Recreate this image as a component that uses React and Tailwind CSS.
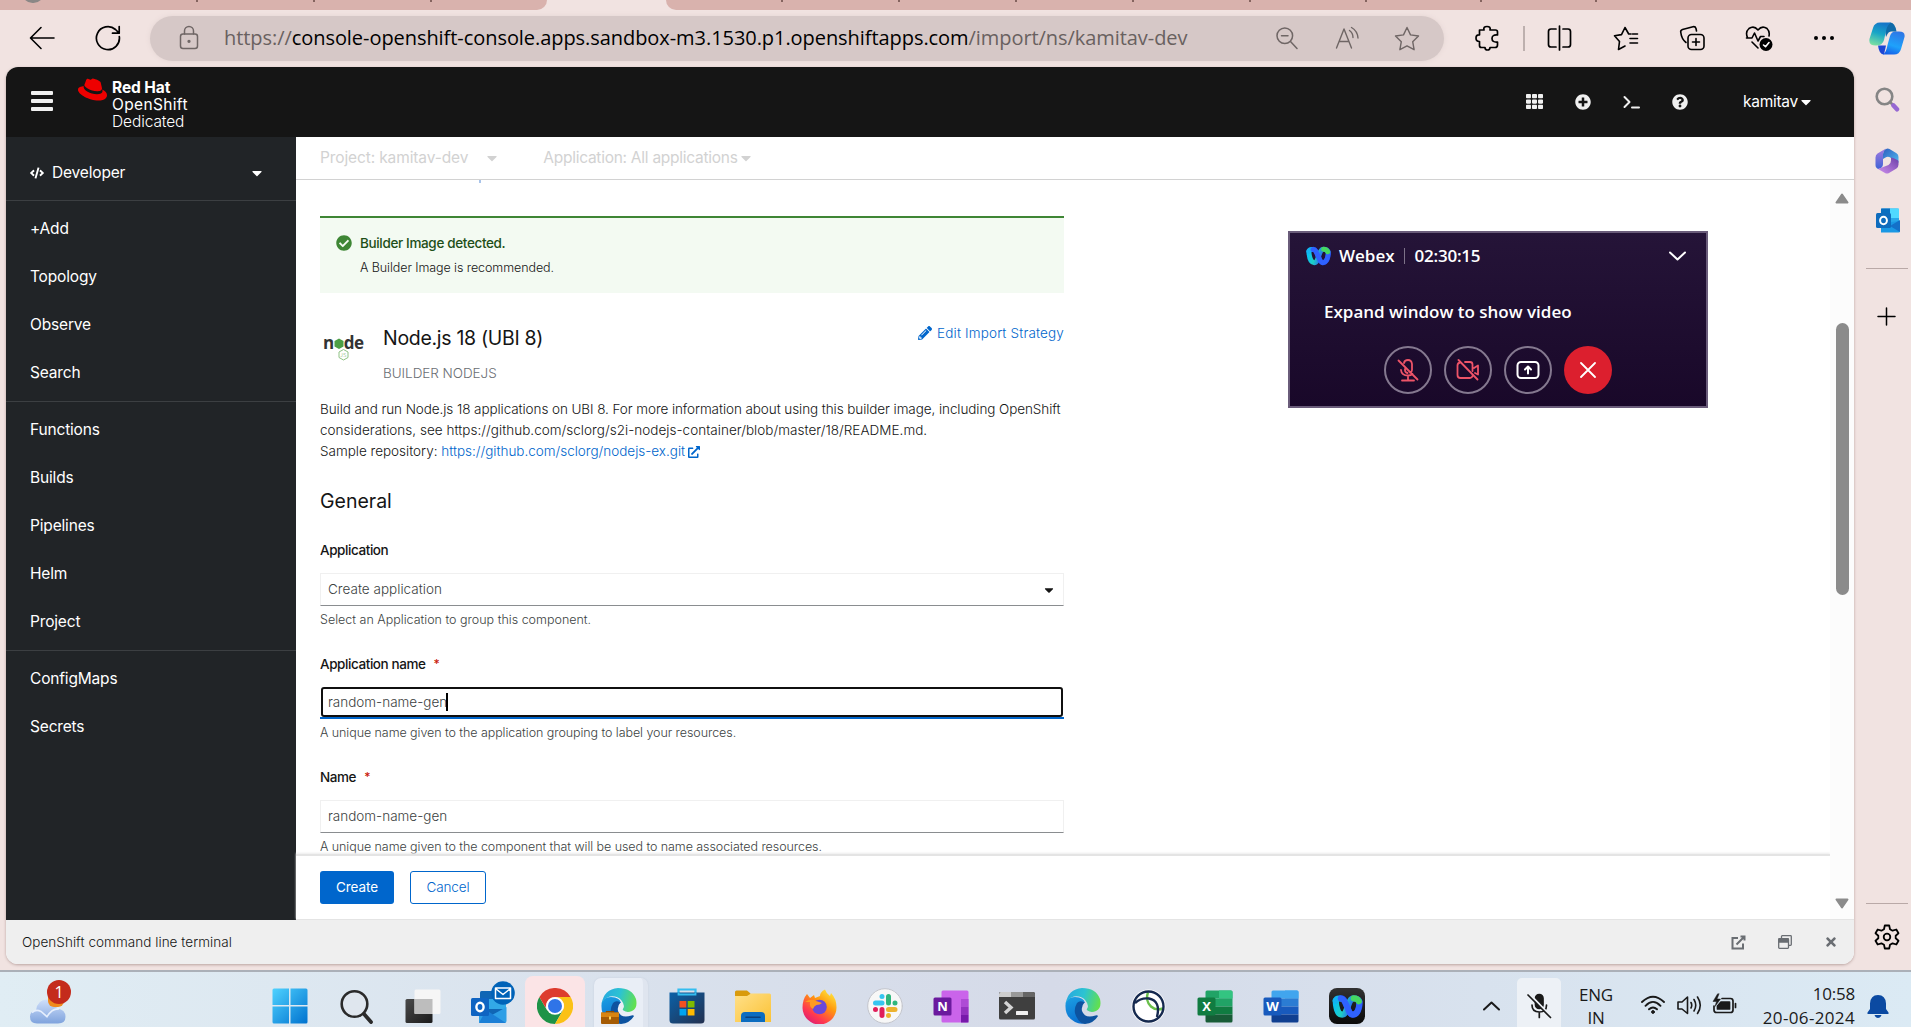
import React from 'react';
import {
  FaRedhat, FaTh, FaPlusCircle, FaQuestionCircle, FaCaretDown, FaCode,
  FaCheckCircle, FaPencilAlt, FaExternalLinkAlt, FaTimes,
} from 'react-icons/fa';

const SEGOE = "font-['Open_Sans','Noto_Sans',sans-serif]";

/* ---------- shared pieces ---------- */

function Line({ children, w = 24, h = 24, sw = 1.5, box = '0 0 24 24', className = '' }) {
  return (
    <svg width={w} height={h} viewBox={box} fill="none" stroke="currentColor" strokeWidth={sw}
      strokeLinecap="round" strokeLinejoin="round" className={`shrink-0 ${className}`}>
      {children}
    </svg>
  );
}

function WebexMark({ w, h, id }) {
  return (
    <svg width={w} height={h} viewBox="0 0 32 24" fill="none" strokeLinecap="round" strokeWidth="6.4">
      <defs>
        <linearGradient id={`${id}a`} x1="0" y1="0" x2="1" y2="0.2">
          <stop offset="0" stopColor="#07c1f4" /><stop offset="0.4" stopColor="#1fcfc4" /><stop offset="0.8" stopColor="#2563f5" />
        </linearGradient>
      </defs>
      <path d="M28.500 7C29 13 26.500 20.500 21.500 20.500C16 20.500 15 3.500 9.500 3.500" stroke="#1d3fd8" />
      <path d="M3.700 6C4 13 6 20.500 10.500 20.500C16.500 20.500 16 3.500 22.500 3.500C25 3.500 27 4.500 28 6" stroke={`url(#${id}a)`} />
      <path d="M3.700 6C4.500 3.500 6.500 3.500 8 3.700" stroke="#12b4f2" />
      <path d="M9 3.600C15 3.600 16 20.500 21.500 20.500C26 20.500 28 14 28.500 8" stroke="#2f62ff" />
      <path d="M22.500 3.500Q26.500 3.600 27.800 6.500" stroke="#45d862" />
    </svg>
  );
}

/* ---------- browser ---------- */

function Ticks({ items }) {
  return items.map((gap, i) => (
    <span key={i} className="flex shrink-0 justify-end" style={{ width: gap }}>
      <i className="h-[2px] w-[2px] bg-[#85645f]" />
    </span>
  ));
}

function TabStrip() {
  return (
    <div className="flex h-[10px] justify-between overflow-hidden">
      <div className="flex w-[547px] rounded-br-[10px] bg-[#d9b2ad]">
        <i className="-mt-[18px] ml-[22px] h-[21px] w-[22px] rounded-full bg-[#8b8786]" />
        <Ticks items={[154, 117, 117]} />
      </div>
      <div className="flex w-[1245px] rounded-bl-[10px] bg-[#d9b2ad]">
        <Ticks items={[117, 117, 117, 117, 117, 116, 115, 115]} />
      </div>
    </div>
  );
}

function Toolbar() {
  return (
    <div className="flex h-[57px] items-center pb-[1px] text-black">
      <Line w={26} h={26} sw={1.6} box="0 0 26 26" className="ml-[29px]">
        <path d="M25 13H2M12 2.500L1.500 13L12 23.500" />
      </Line>
      <Line w={26} h={26} sw={1.7} box="0 0 26 26" className="ml-[40px]">
        <path d="M24.300 11.500A11.500 11.500 0 1 1 20.500 4.500L24 8M24.200 1.500V8.200H17.500" />
      </Line>

      <div className="ml-[29px] flex h-[45px] w-[1294px] items-center rounded-full bg-[#d6c8c7] text-[#6f6665] shadow-[0_0_5px_#e3d4d2]">
        <Line w={20} h={25} sw={1.5} box="0 0 20 25" className="mb-px ml-[29px]">
          <rect x="1.500" y="9" width="17" height="14.500" rx="2.500" />
          <path d="M5.500 9V6A4.500 4.500 0 0 1 14.500 6V9" />
          <circle cx="10" cy="16.300" r="0.900" fill="currentColor" />
        </Line>
        <div className={`ml-[25px] w-[1052px] whitespace-nowrap text-[20px] tracking-[-0.06px] text-[#696160] ${SEGOE}`}>
          https://<span className="text-black">console-openshift-console.apps.sandbox-m3.1530.p1.openshiftapps.com</span>/import/ns/kamitav-dev
        </div>
        <Line w={22} h={23} sw={1.5} box="0 0 22 23">
          <circle cx="8.800" cy="8.800" r="7.800" /><path d="M14.500 14.500L21 21.500M5.500 8.800H12" />
        </Line>
        <Line w={25} h={24} sw={1.4} box="0 0 25 24" className="mb-px ml-[37px]">
          <path d="M1.500 22L9 3L16.500 22M4.200 15.500H13.800M14.500 4.500Q18 7 18 11.500M16.500 1.500Q22.500 5 23 12" />
        </Line>
        <Line w={26} h={25} sw={1.4} box="0 0 26 25" className="ml-[34px]">
          <path d="M13 1.500L16.500 8.900L24.500 10L18.700 15.700L20.100 23.700L13 19.900L5.900 23.700L7.300 15.700L1.500 10L9.500 8.900Z" />
        </Line>
      </div>

      <Line w={25} h={26} sw={1.7} box="0 0 25 26" className="ml-[31px]">
        <path d="M4.500 5H9Q8 1.500 12 1.500T15 5H20.500A2 2 0 0 1 22.500 7V10Q17 9.500 17 13.500T22.500 17V20A2.500 2.500 0 0 1 20 22.500H15Q15 25 12.500 25T10 22.500H6.500A2 2 0 0 1 4.500 20.500V16.500Q1 16.500 1 13T4.500 10Z" />
      </Line>
      <i className="ml-[23px] h-[25px] w-[2px] bg-[#bdb0ae]" />
      <Line w={25} h={26} sw={1.7} box="0 0 25 26" className="ml-[22px]">
        <path d="M12.500 1V25M9 4H4Q1.500 4 1.500 6.500V19.500Q1.500 22 4 22H9M16 4H21Q23.500 4 23.500 6.500V19.500Q23.500 22 21 22H16" />
      </Line>
      <Line w={27} h={25} sw={1.6} box="0 0 27 25" className="ml-[41px]">
        <path d="M18 8H15.700L12 1.500L8.500 8.600L1.500 9.800L6.500 15.500L5.500 23.500L12 20M17 12.500H24.500M17 17H24.500M19.500 8H24.500" />
      </Line>
      <Line w={27} h={26} sw={1.6} box="0 0 27 26" className="ml-[39px]">
        <rect x="9" y="9.500" width="16" height="15" rx="3.500" />
        <path d="M17 13.500V20.500M13.500 17H20.500M17.500 6L17 3.500Q16.300 1.200 14 1.700L3.500 4.500Q1.200 5.300 1.800 7.500Q2.500 14 7 17.500" />
      </Line>
      <Line w={29} h={27} sw={1.6} box="0 0 29 27" className="ml-[39px]">
        <path d="M2.500 12.500Q0 7 4 3.500Q9 0 13 5Q17 0 22 3.500Q25 6.500 24 11M1.500 13H7L9.500 8L13 16L15.500 11.500H19M7 17L13 23" />
        <circle cx="21" cy="19.500" r="6.500" fill="#000" stroke="none" />
        <path d="M18.500 20L20.500 21.700L24 17.500" stroke="#fff" />
      </Line>
      <Line w={24} h={6} sw={0} box="0 0 24 6" className="ml-[38px]">
        <g fill="#000"><circle cx="4" cy="3" r="2" /><circle cx="12" cy="3" r="2" /><circle cx="20" cy="3" r="2" /></g>
      </Line>
      <svg width="36" height="33" viewBox="0 0 36 33" className="ml-[33px] mr-[6px] shrink-0">
        <defs>
          <linearGradient id="cp1" x1="0.500" y1="0" x2="0.200" y2="1"><stop offset="0" stopColor="#1677c8" /><stop offset="0.450" stopColor="#18a5c7" /><stop offset="1" stopColor="#7fe2a0" /></linearGradient>
          <linearGradient id="cp2" x1="0.600" y1="0" x2="0.300" y2="1"><stop offset="0" stopColor="#2e78e6" /><stop offset="0.600" stopColor="#1ea2fb" /><stop offset="1" stopColor="#1560e8" /></linearGradient>
        </defs>
        <path d="M9 23.500H17L15 32.500Q10 32.500 9 23.500Z" fill="#1d46d4" />
        <path d="M14 32.500Q17.500 30 18.500 23L21 14Q22.500 9.500 26 9.500H30Q36.500 9.500 35.500 15L32 27Q30.500 32.500 25 32.500Z" fill="url(#cp2)" />
        <path d="M21 0.500Q26 0.500 27.500 9.500H22Q19.500 9.500 18.500 12L17 15Q14 5 21 0.500Z" fill="#0f6aa8" />
        <path d="M11 0.500H22Q18.500 2 17 9L15 18Q13.500 23.500 7 23.500Q-1 23.500 0.600 16.500L4 6Q5.500 0.500 11 0.500Z" fill="url(#cp1)" />
      </svg>
    </div>
  );
}

function EdgeSidebar() {
  return (
    <div className="flex w-[57px] flex-col items-center pl-[9px] text-black">
      <svg width="25" height="25" viewBox="0 0 25 25" className="mt-[20px]" fill="none" strokeLinecap="round">
        <circle cx="9.500" cy="9.500" r="7.800" stroke="#858585" strokeWidth="2.600" />
        <path d="M15 15L17.500 17.500" stroke="#858585" strokeWidth="2.600" />
        <path d="M18.500 18.500L22 22.300" stroke="#9668d2" strokeWidth="4.500" />
      </svg>
      <svg width="24" height="26" viewBox="0 0 24 26" className="mt-[36px]">
        <defs>
          <linearGradient id="ma" x1="0.500" y1="0" x2="0.500" y2="1"><stop offset="0" stopColor="#a57be0" /><stop offset="1" stopColor="#3f63d6" /></linearGradient>
          <linearGradient id="mb" x1="0" y1="0" x2="1" y2="1"><stop offset="0" stopColor="#2d5fc0" /><stop offset="1" stopColor="#51b8ee" /></linearGradient>
          <linearGradient id="mc" x1="0" y1="1" x2="1" y2="0"><stop offset="0" stopColor="#cf90ee" /><stop offset="1" stopColor="#6b3fa8" /></linearGradient>
        </defs>
        <path d="M11 0.500L2.500 5.500Q0.500 7 0.500 9.500V17Q0.500 20 3.500 21Q8 20 8 16V9Q8 3 11 0.500Z" fill="url(#ma)" />
        <path d="M9.500 2Q12 -0.500 14.500 1L21.500 5.200Q23.500 6.500 23.500 9V15L16 10Q13 8 10.500 9.500L8 11V6Z" fill="url(#mb)" />
        <path d="M23.500 13V16.500Q23.500 19 21.500 20.500L14 25Q12 26 10 25L3 21L13.500 17Q16 15.500 16 12.500V9.500Q22 11 23.500 13Z" fill="url(#mc)" />
      </svg>
      <svg width="24" height="25" viewBox="0 0 24 25" className="ml-px mt-[34px]">
        <rect x="5" y="0.500" width="18" height="18" rx="1.500" fill="#28a8ea" />
        <path d="M14 0.500H23V10H14Z" fill="#50d9ff" /><path d="M5 0.500H14V6H5Z" fill="#0a6fc0" />
        <path d="M5 24.500V15L24 13V23Q24 24.500 22.500 24.500Z" fill="#1a98e4" /><path d="M24 12V24L14 18Z" fill="#1470c8" />
        <rect x="0" y="5" width="15" height="15" rx="1.500" fill="#0f6cbd" />
        <ellipse cx="7.500" cy="12.500" rx="3.400" ry="3.800" fill="none" stroke="#fff" strokeWidth="2" />
      </svg>
      <i className="mt-[35px] h-px w-[42px] bg-[#b9a9a7]" />
      <Line w={19} h={19} sw={1.5} box="0 0 19 19" className="mr-[2px] mt-[38px]"><path d="M9.500 1V18M1 9.500H18" /></Line>
      <i className="mt-[577px] h-px w-[42px] bg-[#b9a9a7]" />
      <Line w={26} h={26} sw={1.8} box="0 0 26 26" className="mt-[20px]">
        <path d="M10.800 1.500H15.200L16 5.200L18.600 6.700L22.300 5.500L24.500 9.300L21.700 11.700V14.300L24.500 16.700L22.300 20.500L18.600 19.300L16 20.800L15.200 24.500H10.800L10 20.800L7.400 19.300L3.700 20.500L1.500 16.700L4.300 14.300V11.700L1.500 9.300L3.700 5.500L7.400 6.700L10 5.200Z" />
        <circle cx="13" cy="13" r="3.300" />
      </Line>
    </div>
  );
}

/* ---------- console ---------- */

function Masthead() {
  return (
    <header className="flex h-[70px] items-center bg-[#151515] text-[#f0f0f0]">
      <div className="mb-[2px] ml-[25px] flex w-[22px] flex-col gap-[4px]">
        <i className="h-[4px] rounded-[1px] bg-[#f0f0f0]" /><i className="h-[4px] rounded-[1px] bg-[#f0f0f0]" /><i className="h-[4px] rounded-[1px] bg-[#f0f0f0]" />
      </div>
      <FaRedhat className="mb-[26px] ml-[25px] size-[29px] text-[#ee0000]" />
      <div className="ml-[5px] mt-[5px] flex flex-col text-[15.500px] leading-[17px] text-white">
        <b className="font-bold tracking-[-0.1px]">Red Hat</b>
        <span className="tracking-[0.35px]">OpenShift</span>
        <span className="font-light tracking-[-0.1px]">Dedicated</span>
      </div>
      <div className="ml-auto flex items-center gap-[32px] pb-px">
        <FaTh className="size-[17px]" />
        <FaPlusCircle className="size-[16px]" />
        <Line w={17} h={16} sw={2} box="0 0 17 16"><path d="M1.500 3L6.500 8L1.500 13M9 13.500H16" /></Line>
        <FaQuestionCircle className="size-[16px]" />
      </div>
      <div className="ml-[55px] mr-[40px] flex items-center text-[15.500px] tracking-[-0.27px] text-white">
        kamitav <FaCaretDown className="size-[16px]" />
      </div>
    </header>
  );
}

const NAV = [
  ['+Add', 'Topology', 'Observe', 'Search'],
  ['Functions', 'Builds', 'Pipelines', 'Helm', 'Project'],
  ['ConfigMaps', 'Secrets'],
];

function Sidebar() {
  return (
    <nav className="w-[290px] shrink-0 bg-[#212427] text-[15.500px] tracking-[-0.17px] text-white">
      <div className="flex h-[64px] items-center border-b border-[#3c3f42] pl-[24px] pr-[31px] pt-[8px]">
        <FaCode className="size-[14px]" />
        <span className="ml-[8px]">Developer</span>
        <FaCaretDown className="ml-auto size-[16px]" />
      </div>
      {NAV.map((group, i) => (
        <div key={i} className={i < 2 ? 'border-b border-[#3c3f42] py-[4px]' : 'py-[4px]'}>
          {group.map((n) => <div key={n} className="flex h-[48px] items-center pl-[24px]">{n}</div>)}
        </div>
      ))}
    </nav>
  );
}

function Label({ children, required }) {
  return (
    <div className="flex h-[20px] items-center text-[13.500px] font-medium tracking-[-0.42px] text-[#151515]">
      {children}
      {required && <span className="ml-[8px] text-[12px] text-[#c9190b]">*</span>}
    </div>
  );
}

function Help({ children, tracking = 'tracking-[-0.07px]' }) {
  return <div className={`flex h-[20px] items-center whitespace-nowrap text-[12.500px] font-[350] text-[#3c3f42] ${tracking}`}>{children}</div>;
}

function ImportForm() {
  return (
    <div className="h-[674px] w-[744px] overflow-hidden font-[350]">
      <i className="ml-[159px] block h-[3px] w-[2px] bg-[#a9c4ea]" />
      <div className="mt-[33px] flex h-[77px] border-t-2 border-[#3e8635] bg-[#f3faf2] pl-[16px] text-[13.500px]">
        <FaCheckCircle className="mt-[17px] size-[16px] text-[#3e8635]" />
        <div className="ml-[8px] mt-[14px] flex flex-col gap-[2px] leading-[24px]">
          <span className="font-medium leading-[22px] tracking-[-0.35px] text-[#1e4f18]">Builder Image detected.</span>
          <span className="text-[12.500px] tracking-[-0.08px] text-[#151515]">A Builder Image is recommended.</span>
        </div>
      </div>

      <div className="mt-[28px] flex h-[72px]">
        <svg width="44" height="30" viewBox="0 0 44 30" className="ml-[2px] mt-[11px]">
          <g fontFamily="Open Sans" fontWeight="700" fontSize="17" fill="#333">
            <text x="1" y="17">n</text><text x="21.700" y="17">d</text><text x="32" y="17">e</text>
          </g>
          <path d="M17 6.500L21.500 9V14.500L17 17L12.500 14.500V9Z" fill="#4c9f45" />
          <path d="M21.500 17.500L26 20V25.500L21.500 28L17 25.500V20Z" fill="none" stroke="#8fc285" />
          <text x="18.300" y="25.200" fontSize="6.500" fontFamily="Lato" fill="#6fb064">JS</text>
        </svg>
        <div className="ml-[17px] flex flex-col text-[#151515]">
          <span className="mt-[3px] text-[19.500px] font-normal leading-[28px] tracking-[-0.3px]">Node.js 18 (UBI 8)</span>
          <span className="mt-[11px] text-[13.500px] leading-[20px] tracking-[-0.05px] text-[#6a6e73]">BUILDER NODEJS</span>
        </div>
        <div className="ml-auto flex h-[24px] items-center gap-[5px] text-[13.500px] tracking-[0.16px] text-[#0066cc]">
          <FaPencilAlt className="size-[14px]" />Edit Import Strategy
        </div>
      </div>

      <div className="mt-[6px] whitespace-nowrap text-[13.500px] leading-[21px] tracking-[-0.08px] text-[#151515]">
        <div>Build and run Node.js 18 applications on UBI 8. For more information about using this builder image, including OpenShift</div>
        <div className="tracking-[0.03px]">considerations, see https://github.com/sclorg/s2i-nodejs-container/blob/master/18/README.md.</div>
        <div className="flex items-center tracking-[-0.01px]">
          Sample repository:&nbsp;<span className="text-[#0066cc]">https://github.com/sclorg/nodejs-ex.git</span>
          <FaExternalLinkAlt className="ml-[3px] size-[12px] text-[#0066cc]" />
        </div>
      </div>

      <h2 className="mt-[25px] text-[19.500px] font-normal leading-[28px] text-[#151515]">General</h2>

      <div className="mt-[25px]"><Label>Application</Label></div>
      <div className="mt-[13px] flex h-[33px] items-center justify-between border border-[#f0f0f0] border-b-[#8a8d90] pl-[7px] pr-[7px] text-[13.500px] tracking-[0.02px] text-[#3c3f42]">
        Create application <FaCaretDown className="size-[14px] text-[#151515]" />
      </div>
      <div className="mt-[4px]"><Help tracking="tracking-[0px]">Select an Application to group this component.</Help></div>

      <div className="mt-[24px]"><Label required>Application name</Label></div>
      <div className="mt-[13px] h-[32px] border-b-2 border-[#0066cc] px-px">
        <div className="flex h-[30px] items-center rounded-[3px] border-2 border-[#101010] pl-[5px] text-[13.500px] text-[#3c3f42]">
          random-name-gen<i className="-ml-px h-[18px] w-[2px] bg-black" />
        </div>
      </div>
      <div className="mt-[4px]"><Help>A unique name given to the application grouping to label your resources.</Help></div>

      <div className="mt-[24px]"><Label required>Name</Label></div>
      <div className="mt-[13px] flex h-[33px] items-center border border-[#f0f0f0] border-b-[#8a8d90] pl-[7px] text-[13.500px] text-[#3c3f42]">
        random-name-gen
      </div>
      <div className="mt-[4px]"><Help>A unique name given to the component that will be used to name associated resources.</Help></div>
    </div>
  );
}

function WebexPanel() {
  const ring = 'flex size-[48px] items-center justify-center rounded-full border-2 border-[#84788f]';
  return (
    <section className={`absolute left-[1288px] top-[231px] flex h-[177px] w-[420px] flex-col border-2 border-[#6a5c7a] bg-linear-to-b from-[#251438] to-[#190829] text-[17px] font-semibold text-white ${SEGOE}`}>
      <div className="mt-[10px] flex h-[26px] items-center pl-[16px] pr-[20px]">
        <WebexMark w={25} h={20} id="wp" />
        <span className="ml-[8px]">Webex</span>
        <i className="ml-[9px] h-[16px] w-px bg-[#7d7288]" />
        <span className="ml-[10px] tracking-[-0.25px]">02:30:15</span>
        <Line w={17} h={10} sw={2} box="0 0 17 10" className="ml-auto"><path d="M1 1.500L8.500 8.500L16 1.500" /></Line>
      </div>
      <div className="mt-[30px] pl-[34px] leading-[26px]">Expand window to show video</div>
      <div className="mt-[21px] flex gap-[12px] pl-[94px]">
        <span className={ring}>
          <Line w={22} h={24} sw={1.8} box="0 0 22 24" className="text-[#ee5468]">
            <path d="M7 5Q7.500 2 11 2T15 6V12Q15 14 13 14.500M8 11V12Q8 14.500 10.500 15M11 17.500V22M5 22.500H17M4 12Q4.500 17.500 11 17.500Q14 17.500 15.500 16M1.500 2.500L20.500 21.500" />
          </Line>
        </span>
        <span className={ring}>
          <Line w={24} h={22} sw={1.8} box="0 0 24 22" className="text-[#ee5468]">
            <path d="M9 3H14Q16.500 3 16.500 5.500V12M4 3.500Q1.500 4 1.500 6.500V16Q1.500 19 4.500 19H14Q16 19 16.500 17M18 9L22 6.500V15.500L19 14M2.500 1L21.500 20.500" />
          </Line>
        </span>
        <span className={ring}>
          <Line w={24} h={20} sw={2} box="0 0 24 20">
            <rect x="1.500" y="2" width="21" height="16" rx="3.500" /><path d="M12 13.500V7M9 9.500L12 6.500L15 9.500" />
          </Line>
        </span>
        <span className="flex size-[48px] items-center justify-center rounded-full bg-[#dc1f2e]">
          <Line w={16} h={16} sw={1.8} box="0 0 16 16"><path d="M1 1L15 15M15 1L1 15" /></Line>
        </span>
      </div>
    </section>
  );
}

function Console() {
  return (
    <div className="ml-[6px] flex h-[897px] w-[1848px] shrink-0 flex-col overflow-hidden rounded-[12px] bg-white font-['Inter',sans-serif] shadow-[0_1px_3px_#b9a3a0]">
      <Masthead />
      <div className="flex h-[783px]">
        <Sidebar />
        <div className="flex min-w-0 flex-1 flex-col">
          <div className="flex h-[43px] shrink-0 items-center border-b border-[#d2d2d2] pb-px pl-[24px] text-[15.500px] text-[#d2d2d2]">
            <span className="tracking-[-0.12px]">Project: kamitav-dev</span>
            <FaCaretDown className="ml-[16px] size-[16px]" />
            <span className="ml-[43px] tracking-[-0.26px]">Application: All applications</span>
            <FaCaretDown className="size-[16px]" />
          </div>
          <div className="flex h-[740px]">
            <div className="flex flex-1 flex-col">
              <div className="pl-[24px]"><ImportForm /></div>
              <div className="flex h-[66px] items-center gap-[16px] border-b border-t-2 border-[#e4e4e4] bg-white pl-[24px] text-[13.500px] tracking-[-0.1px] shadow-[0_-1px_2px_#ececec]">
                <span className="flex h-[33px] w-[74px] items-center justify-center rounded-[3px] bg-[#0066cc] text-white">Create</span>
                <span className="flex h-[33px] w-[76px] items-center justify-center rounded-[3px] border border-[#0066cc] font-[350] text-[#0066cc]">Cancel</span>
              </div>
            </div>
            <div className="flex w-[24px] flex-col items-center border-b border-[#e4e4e4] bg-[#fcfcfc]">
              <svg width="14" height="11" viewBox="0 0 14 11" className="mt-[13px]"><path d="M7 1.500L12.500 9.500H1.500Z" fill="#8b8b8b" stroke="#8b8b8b" strokeWidth="2" strokeLinejoin="round" /></svg>
              <i className="mt-[119px] h-[272px] w-[13px] rounded-full bg-[#8b8b8b]" />
              <svg width="14" height="11" viewBox="0 0 14 11" className="mt-[303px]"><path d="M7 9.500L12.500 1.500H1.500Z" fill="#8b8b8b" stroke="#8b8b8b" strokeWidth="2" strokeLinejoin="round" /></svg>
            </div>
          </div>
        </div>
      </div>
      <div className="flex h-[44px] items-center bg-[#efefef] pl-[16px] pr-[16px] text-[13.500px] font-[350] tracking-[0.05px] text-[#151515]">
        OpenShift command line terminal
        <div className="ml-auto flex items-center gap-[32px] text-[#6a6e73]">
          <Line w={15} h={15} sw={2} box="0 0 15 15"><path d="M7 3H1.500V13.500H12V8.500M5.500 9.500L13 2M9.500 1.500H13.500V5.500" strokeLinecap="butt" strokeLinejoin="miter" /></Line>
          <Line w={14} h={14} sw={1.300} box="0 0 14 14">
            <path d="M3.500 3.500V1.500Q3.500 0.700 4.300 0.700H12.500Q13.300 0.700 13.300 1.500V9.500Q13.300 10.300 12.500 10.300H11" />
            <rect x="0.700" y="3.700" width="9.800" height="9.600" rx="0.800" /><path d="M1 4H10.200V7H1Z" fill="currentColor" />
          </Line>
          <FaTimes className="size-[14px]" />
        </div>
      </div>
    </div>
  );
}

/* ---------- taskbar ---------- */

function EdgeIcon({ id }) {
  return (
    <svg width="36" height="36" viewBox="0 0 36 36">
      <defs>
        <linearGradient id={`${id}t`} x1="0" y1="0.300" x2="1" y2="0.500"><stop offset="0" stopColor="#27a8e0" /><stop offset="0.500" stopColor="#2cc3d2" /><stop offset="1" stopColor="#62e04e" /></linearGradient>
        <linearGradient id={`${id}b`} x1="0.200" y1="0" x2="0.500" y2="1"><stop offset="0" stopColor="#1b9de2" /><stop offset="1" stopColor="#0a6fd0" /></linearGradient>
      </defs>
      <path d="M0.500 17Q1 9 10 9Q19 9.500 20 15Q14 14 13 20Q12 30 22 34.500Q16 37 10 34Q0 29 0.500 17Z" fill={`url(#${id}b)`} />
      <path d="M12 15Q8 22 11 28Q15 36 20 36Q29 35 33 28Q32.500 27 30.500 27.500Q20 31 17 23Q16 18 19.500 14.500Q15 12 12 15Z" fill="#0d53a0" />
      <path d="M0.500 16Q3 1 17 0Q31 0 35 11Q37 20 31 23Q26 25 22.500 22.500Q21 21.500 22.500 20Q24 17 20.500 12.500Q16 7.500 9 8.500Q3 10 0.500 16Z" fill={`url(#${id}t)`} />
    </svg>
  );
}

function OfficeIcon({ letter, shades, tile }) {
  return (
    <svg width="36" height="33" viewBox="0 0 36 33">
      <path d="M8.500 2Q8.500 0.500 10 0.500H34Q35.500 0.500 35.500 2V8.500H8.500Z" fill={shades[0]} />
      <path d="M22 0.500H34Q35.500 0.500 35.500 2V8.500H22Z" fill={shades[1]} />
      <path d="M8.500 8.500H35.500V16.500H8.500Z" fill={shades[2]} />
      <path d="M8.500 16.500H35.500V24.500H8.500Z" fill={shades[3]} />
      <path d="M8.500 24.500H35.500V31Q35.500 32.500 34 32.500H10Q8.500 32.500 8.500 31Z" fill={shades[4]} />
      <rect x="0.500" y="7.500" width="18" height="18" rx="1.500" fill={tile} />
      <text x="9.500" y="21.300" textAnchor="middle" fontFamily="Open Sans" fontWeight="700" fontSize="13" fill="#fff">{letter}</text>
    </svg>
  );
}

const APPS = [
  <svg key="win" width="36" height="36" viewBox="0 0 36 36" className="-ml-[3px]">
    <defs><linearGradient id="wn" x1="0" y1="0" x2="1" y2="1"><stop offset="0" stopColor="#4fd2ff" /><stop offset="1" stopColor="#0072cf" /></linearGradient></defs>
    <path d="M2 0.500H17V17H0.500V2Q0.500 0.500 2 0.500ZM18.500 0.500H34Q35.500 0.500 35.500 2V17H18.500ZM0.500 18.500H17V35.500H2Q0.500 35.500 0.500 34ZM18.500 18.500H35.500V34Q35.500 35.500 34 35.500H18.500Z" fill="url(#wn)" />
  </svg>,
  <svg key="search" width="34" height="35" viewBox="0 0 34 35" fill="none" stroke="#2a2a2a" strokeLinecap="round">
    <circle cx="14.500" cy="15" r="12.800" strokeWidth="2.600" fill="#dfe6ee" /><path d="M24 25L31 33" strokeWidth="3.800" />
  </svg>,
  <svg key="task" width="36" height="35" viewBox="0 0 36 35" className="-ml-px">
    <defs><linearGradient id="tv" x1="0" y1="0" x2="1" y2="1"><stop offset="0" stopColor="#4a4a4a" /><stop offset="1" stopColor="#1b1b1b" /></linearGradient></defs>
    <rect x="0.500" y="10" width="27" height="24" rx="1.500" fill="url(#tv)" />
    <rect x="9.500" y="0.500" width="26" height="24.500" rx="1.500" fill="#f6f6f6" /><path d="M9.500 10H27.500V25H9.500Z" fill="#bdbdbd" />
  </svg>,
  <svg key="outlook" width="44" height="44" viewBox="0 0 44 44" className="-mt-[8px] ml-[7px]">
    <rect x="9" y="11" width="26" height="25" rx="1.500" fill="#1066b5" /><path d="M18 19H35V29H18Z" fill="#32a9e7" /><path d="M9 19H18V29H9Z" fill="#1583d0" />
    <path d="M8 42V29L21 35L35.500 27V41Q35.500 43 33.500 43H10Q8 43 8 42Z" fill="#2e9fe6" /><path d="M8 43L35 43L15 30Z" fill="#1b7fd6" />
    <rect x="0" y="18" width="18" height="18" rx="1.500" fill="#0f64c2" />
    <ellipse cx="9" cy="27" rx="3.600" ry="4.200" fill="none" stroke="#fff" strokeWidth="2.400" />
    <circle cx="32" cy="13" r="11.800" fill="#0063b8" />
    <path d="M24.500 8H39.500V18.500H24.500ZM24.500 8.500L32 14.500L39.500 8.500" fill="none" stroke="#fff" strokeWidth="1.500" strokeLinejoin="round" />
  </svg>,
  <svg key="chrome" width="36" height="36" viewBox="0 0 36 36">
    <path d="M18 36A18 18 0 0 1 2.400 9L10.200 22.500L25.800 22.500Z" fill="#1e9347" />
    <path d="M2.400 9A18 18 0 0 1 33.600 9H18A9 9 0 0 0 10 14L8.500 19.500Z" fill="#dd3b2e" />
    <path d="M18 36L25.800 22.500A9 9 0 0 0 18 9H33.600A18 18 0 0 1 18 36Z" fill="#fbc116" />
    <circle cx="18" cy="18" r="8.800" fill="#fff" /><circle cx="18" cy="18" r="7" fill="#2f74e8" />
  </svg>,
  <span key="edgework" className="relative block">
    <EdgeIcon id="e1" />
    <svg width="18" height="13" viewBox="0 0 18 13" className="absolute bottom-0 left-0">
      <path d="M5.500 2V0.700H12.500V2" fill="none" stroke="#8b4d00" strokeWidth="1.300" /><rect y="1.500" width="18" height="11.500" rx="1" fill="#a55b04" /><path d="M0 1.500H18V6H0Z" fill="#d88410" /><rect x="8" y="5.500" width="2" height="3" fill="#ffd65c" />
    </svg>
  </span>,
  <svg key="store" width="36" height="36" viewBox="0 0 36 36" className="-ml-px">
    <defs><linearGradient id="st" x1="0" y1="0" x2="1" y2="1"><stop offset="0" stopColor="#0b61a8" /><stop offset="1" stopColor="#23304f" /></linearGradient></defs>
    <path d="M9.500 7V1.500H26.500V7" fill="none" stroke="#34bdf0" strokeWidth="2.200" />
    <path d="M0.500 4.500H35.500V32Q35.500 35.500 32 35.500H4Q0.500 35.500 0.500 32Z" fill="url(#st)" /><path d="M9.500 4.500V6.500H26.500V4.500" fill="none" stroke="#34bdf0" strokeWidth="1.800" />
    <path d="M10.500 13H17.300V19.500H10.500Z" fill="#f25022" /><path d="M18.700 13H25.500V19.500H18.700Z" fill="#7fba00" /><path d="M10.500 21H17.300V27.500H10.500Z" fill="#00a4ef" /><path d="M18.700 21H25.500V27.500H18.700Z" fill="#ffb900" />
  </svg>,
  <svg key="folder" width="36" height="33" viewBox="0 0 36 33">
    <defs><linearGradient id="fd" x1="0" y1="0" x2="1" y2="1"><stop offset="0" stopColor="#ffe08a" /><stop offset="1" stopColor="#fbc235" /></linearGradient></defs>
    <path d="M0 2Q0 0.500 1.500 0.500H12L15.500 3.500V9H0Z" fill="#d99a0b" /><path d="M0 6H12L16 3.500H34.500Q36 3.500 36 5V32H0Z" fill="url(#fd)" />
    <path d="M6 32V26Q6 22 10 22H26Q30 22 30 26V32Z" fill="#0b6cc0" /><path d="M11 27.300H25" stroke="#0a3f7c" strokeWidth="1.600" strokeLinecap="round" />
  </svg>,
  <svg key="firefox" width="35" height="35" viewBox="0 0 35 35">
    <defs><linearGradient id="fx" x1="0.900" y1="0" x2="0.200" y2="1"><stop offset="0" stopColor="#fff044" /><stop offset="0.400" stopColor="#ff980e" /><stop offset="0.750" stopColor="#ff3750" /><stop offset="1" stopColor="#d81b78" /></linearGradient></defs>
    <path d="M5 5L8 9L12 6L13 9L18 7Q18 3 23 0.500Q24 4 28 7L29 4Q34.500 10 34.500 18A17 17 0 0 1 0.500 19Q0.500 10 5 5Z" fill="url(#fx)" />
    <circle cx="17.500" cy="18" r="7.300" fill="#6b48d8" /><path d="M3 13Q9 9 14 12L20 14Q18 16 14.500 16Q12 17 11 20Q7 18 8 13Z" fill="#ff9a20" />
  </svg>,
  <svg key="slack" width="36" height="36" viewBox="0 0 36 36" fill="none" strokeLinecap="round" strokeWidth="5">
    <circle cx="18" cy="18" r="17.300" fill="#f7f7f7" stroke="#c3c5cc" strokeWidth="1" />
    <path d="M15 8.500V8.500M8.500 15H15" stroke="#36c5f0" /><path d="M21.500 8.500V15M28 15V15" stroke="#2eb67d" />
    <path d="M21.500 21.500H28M21.500 27.500V27.500" stroke="#ecb22e" /><path d="M15 21.500V27.500M8.500 21.500V21.500" stroke="#e01e5a" />
  </svg>,
  <svg key="onenote" width="36" height="33" viewBox="0 0 36 33">
    <rect x="8.500" y="0.500" width="27" height="32" rx="1.500" fill="#ca64ea" /><path d="M28 9H35.500V17H28Z" fill="#ae4bd5" /><path d="M28 17H35.500V25H28Z" fill="#9332bf" /><path d="M28 25H35.500V32.500H28Z" fill="#7719aa" />
    <rect x="0.500" y="7.500" width="18" height="18" rx="1.500" fill="#6b1a9e" />
    <text x="9.500" y="21.300" textAnchor="middle" fontFamily="Open Sans" fontWeight="700" fontSize="13" fill="#fff">N</text>
  </svg>,
  <svg key="term" width="36" height="28" viewBox="0 0 36 28">
    <rect width="36" height="27.500" rx="1.500" fill="#3f3f3f" /><path d="M1.500 0H12V5H0V1.500Z" fill="#cdcdcd" /><path d="M12 0H24V5H12Z" fill="#999" /><path d="M24 0H34.500L36 1.500V5H24Z" fill="#666" />
    <path d="M6 10L12 15.500L6 21" stroke="#d4d4d4" strokeWidth="3.400" fill="none" /><rect x="17" y="19" width="12" height="4" rx="0.500" fill="#f0f0f0" />
  </svg>,
  <EdgeIcon key="edge" id="e2" />,
  <svg key="ring" width="35" height="35" viewBox="0 0 35 35" fill="none" className="-ml-[2px]">
    <circle cx="17.500" cy="17.500" r="17" fill="#fff" /><path d="M17 3Q14 12 20 17.500Q25 22 32 19.500" stroke="#6abf4b" strokeWidth="2.400" />
    <circle cx="17.500" cy="17.500" r="15" stroke="#15294f" strokeWidth="2.400" /><path d="M4 14Q10 8.500 18 9.500Q30 12 26 28" stroke="#15294f" strokeWidth="2.400" />
  </svg>,
  <OfficeIcon key="x" letter="X" tile="#107c41" shades={['#21a366', '#33c481', '#21a366', '#107c41', '#185c37']} />,
  <OfficeIcon key="w" letter="W" tile="#185abd" shades={['#41a5ee', '#41a5ee', '#2b7cd3', '#185abd', '#103f91']} />,
  <span key="wx" className="flex size-[36px] items-center justify-center rounded-[8px] bg-linear-to-b from-[#323232] to-[#0a0a0a]"><WebexMark w={31} h={23} id="wt" /></span>,
];

function Taskbar() {
  return (
    <div className={`flex h-[57px] border-t-2 border-[#abb0b8] bg-linear-to-r from-[#e0edf4] via-[#d5dae8] via-55% to-[#dbeaf4] text-[17px] text-[#1a1a1a] ${SEGOE}`}>
      <div className="relative w-[258px] pl-[29px] pt-[27px]">
        <svg width="37" height="25" viewBox="0 0 37 24" preserveAspectRatio="none">
          <defs><linearGradient id="cl" x1="0" y1="0" x2="0" y2="1"><stop offset="0" stopColor="#cfdffa" /><stop offset="1" stopColor="#7fa3dd" /></linearGradient></defs>
          <path d="M8 23.500Q1 23.500 1 17Q1 11.500 7 11Q8.500 0.500 18 0.500Q26 0.500 28 9Q36.500 10 36.500 17Q36.500 23.500 29 23.500Z" fill="url(#cl)" />
          <path d="M3 13Q7 9.500 12 12L18 17Q23 9 30 9.500" fill="none" stroke="#e6effd" strokeWidth="1.500" />
        </svg>
        <i className="absolute left-[48px] top-[20px] h-[15px] w-[16px] rounded-b-[6px] bg-[#f08a1d]" />
        <span className="absolute left-[47px] top-[8px] flex size-[24px] items-center justify-center rounded-full bg-[#c42b1c] text-[16px] text-white">1</span>
      </div>
      {APPS.map((icon, i) => (
        <div key={i} className="flex w-[66px] shrink-0 justify-center">
          <div className={
            i === 4 ? 'mt-[4px] flex h-[60px] w-[60px] items-center justify-center rounded-t-[8px] bg-[#fbe4e6]'
              : i === 5 ? 'mt-[6px] flex h-[56px] w-[54px] items-center justify-center rounded-t-[7px] border-r-[5px] border-[#dfe5ef] bg-[#e9eef6] shadow-[0_0_2px_#c6cedd]'
                : 'mt-[4px] flex h-[60px] w-[66px] items-center justify-center'
          }>{icon}</div>
        </div>
      ))}
      <Line w={17} h={10} sw={2} box="0 0 17 10" className="ml-[103px] mt-[29px]"><path d="M1 8.500L8.500 1.500L16 8.500" /></Line>
      <div className="ml-[17px] mt-[6px] flex w-[44px] shrink-0 justify-center rounded-t-[5px] bg-[#edf1f6] pt-[15px]">
        <Line w={25} h={26} sw={1.700} box="0 0 25 26">
          <rect x="8.500" y="1.500" width="7.500" height="14" rx="3.700" fill="currentColor" /><path d="M5 12Q5 19 12.300 19T19.500 12M12.300 19V24.500" />
          <path d="M3 1.500L24.500 24" stroke="#edf1f6" strokeWidth="2" /><path d="M1 2L23.500 24.500" />
        </Line>
      </div>
      <div className="ml-[17px] w-[36px] shrink-0 pt-[11px] text-center leading-[23px] tracking-[-0.2px]"><div>ENG</div><div>IN</div></div>
      <div className="ml-[27px] flex shrink-0 gap-[12px] pt-[21px]">
        <Line w={24} h={25} sw={1.900} box="0 0 24 25">
          <path d="M1 9Q12 -1.500 23 9M4.500 12.800Q12 5 19.500 12.800M8 16.300Q12 12.500 16 16.300" /><circle cx="12" cy="19" r="1.400" fill="currentColor" strokeWidth="1" />
        </Line>
        <Line w={25} h={25} sw={1.600} box="0 0 25 25">
          <path d="M1 9H5L10.500 4V20.500L5 16H1ZM14 9.500Q15.500 12.300 14 15M17 6.500Q20.500 12.300 17 18M20.500 4Q26 12.300 20.500 20.500" />
        </Line>
        <Line w={25} h={25} sw={1.700} box="0 0 25 25" className="-ml-[2px]">
          <path d="M10 5.500H18.500Q21 5.500 21 8V17Q21 19.500 18.500 19.500H4.500Q2 19.500 2 17V13M23.500 10.500V14.500" /><path d="M9 9H17.500V16H5.500V13Z" fill="currentColor" /><path d="M5.500 1L1 8.500H4.500L3 13.500L8.500 6H5L7 1Z" fill="currentColor" strokeWidth="0.500" />
        </Line>
      </div>
      <div className="ml-auto shrink-0 pt-[10px] text-right leading-[24px]"><div className="tracking-[-0.2px]">10:58</div><div className="tracking-[0.35px]">20-06-2024</div></div>
      <svg width="22" height="25" viewBox="0 0 22 25" className="ml-[12px] mr-[22px] mt-[22px] shrink-0" fill="#0b4aa2">
        <path d="M3 15V9.500Q3.500 1 11 1T19 9.500V15L21.500 18.500V20H0.500V18.500ZM7.500 21H14.500Q13.500 24 11 24T7.500 21Z" />
      </svg>
    </div>
  );
}

export default function App() {
  return (
    <div className="relative flex h-[1027px] w-[1911px] flex-col overflow-hidden bg-[#f1e3e1]">
      <TabStrip />
      <Toolbar />
      <div className="flex h-[903px]">
        <Console />
        <EdgeSidebar />
      </div>
      <Taskbar />
      <WebexPanel />
    </div>
  );
}
